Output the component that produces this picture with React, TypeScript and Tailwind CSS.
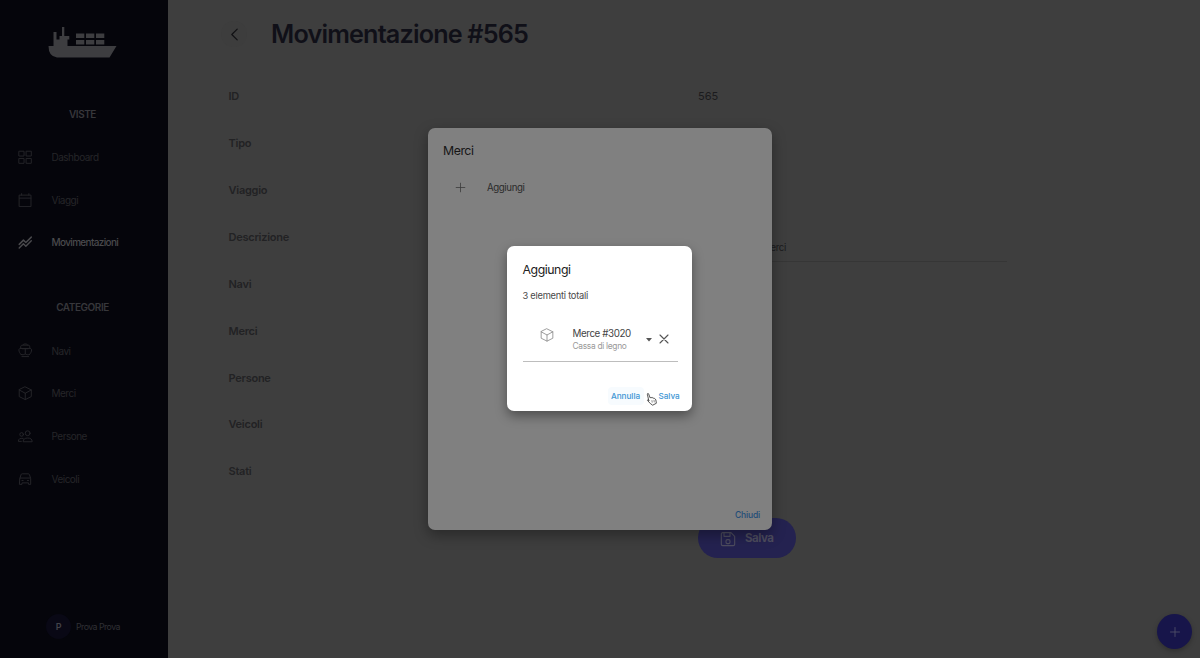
import React from "react";

type IconProps = { className?: string; sw?: number; children: React.ReactNode };

function Icon({ className = "size-4", sw = 1.5, children }: IconProps) {
  return (
    <svg
      viewBox="0 0 24 24"
      fill="none"
      stroke="currentColor"
      strokeWidth={sw}
      strokeLinecap="round"
      strokeLinejoin="round"
      className={`shrink-0 ${className}`}
    >
      {children}
    </svg>
  );
}

const cube = (
  <>
    <path d="M12 1.5 22 6.5v11l-10 5-10-5v-11z" />
    <path d="M2 6.500l10 5.500 10-5.500M12 12v10.500" />
  </>
);

const icons = {
  dashboard: <path strokeLinejoin="miter" d="M2 2h8v8H2zM14 2h8v8h-8zM2 14h8v8H2zM14 14h8v8h-8z" />,
  calendar: <path d="M2.500 3.500h19v19h-19zM2.500 8.500h19M6 3.500V1M18 3.500V1" />,
  moves: <path d="M2 15.500l7-7 4 4 9-9M2 21.500l7-7 4 4 9-9" />,
  ship: (
    <>
      <path d="M8 3.500C8.500 2 10 1.500 12 1.500s3.500.5 4 2M4.500 9V6.500c0-2 1-3 3-3h9c2 0 3 1 3 3V9" />
      <path d="M5 19C3 17 1.500 14 1.500 11.500 1.500 9.500 3 9 5 9h14c2 0 3.500.5 3.500 2.500 0 2.500-1.500 5.500-3.500 7.500M12 9v9M7.500 9.500h9" />
      <path d="M5 19c2.500 1 5 .5 7-1 2 1.500 4.500 2 7 1M6.500 22.500h11" />
    </>
  ),
  cube,
  people: (
    <>
      <circle cx="16" cy="7" r="4" />
      <path d="M8.500 20.500c0-4 3-5.500 7.500-5.500s7.500 1.500 7.500 5.500z" />
      <circle cx="6" cy="9" r="3" />
      <path d="M8.500 15.500C3 15 .5 16.500.5 20.500h5" />
    </>
  ),
  car: (
    <>
      <path d="M3 11l2-6.500c.3-1 1-1.500 2-1.500h10c1 0 1.700.5 2 1.500L21 11v9.500h-3.500V18h-11v2.500H3zM3.500 10h17" />
      <path d="M6.500 14h2M15.500 14h2" />
    </>
  ),
};

function Logo() {
  return (
    <svg viewBox="0 0 69 31" className="h-[31px] w-[69px] fill-[#3d3d40]">
      <path d="M0.500 19H5.500V5h3v7.500h3V9H14V0h2.300v9h5v3.500H19.500V19H68.500L61.500 30.500H9Q0.500 29.500 0.500 19Z" />
      <path d="M28 6.500h8.300V11H28zM38 6.500h8.300V11H38zM48 6.500h8.300V11H48zM28 13h8.300v4.500H28zM38 13h8.300v4.500H38zM48 13h8.300v4.500H48z" />
    </svg>
  );
}

function NavItem({ icon, label, active = false }: { icon: React.ReactNode; label: string; active?: boolean }) {
  return (
    <li
      className={`flex h-[42.75px] items-center gap-[19px] pl-[18px] ${
        active
          ? "text-[10px] font-medium tracking-[-0.65px] text-[#4a4a4d]"
          : "pt-px text-[10px] tracking-[-0.5px] text-[#252529]"
      }`}
    >
      <Icon className="-mt-px size-[14.5px]" sw={active ? 2.4 : 1.6}>{icon}</Icon>
      {label}
    </li>
  );
}

const rows = ["ID", "Tipo", "Viaggio", "Descrizione", "Navi", "Merci", "Persone", "Veicoli", "Stati"];

function Sidebar() {
  return (
    <aside className="flex w-[168px] shrink-0 flex-col bg-[#05050b]">
      <div className="mt-[27px] pl-12">
        <Logo />
      </div>
      <h2 className="mt-[49px] h-[14px] pr-[3px] text-center text-[10px] leading-[14px] font-semibold tracking-[-0.45px] text-[#37373b]">VISTE</h2>
      <ul className="mt-[15px]">
        <NavItem icon={icons.dashboard} label="Dashboard" />
        <NavItem icon={icons.calendar} label="Viaggi" />
        <NavItem icon={icons.moves} label="Movimentazioni" active />
      </ul>
      <h2 className="mt-9 h-[14px] pr-[3px] text-center text-[10px] leading-[14px] font-semibold tracking-[-0.45px] text-[#37373b]">CATEGORIE</h2>
      <ul className="mt-[15px]">
        <NavItem icon={icons.ship} label="Navi" />
        <NavItem icon={icons.cube} label="Merci" />
        <NavItem icon={icons.people} label="Persone" />
        <NavItem icon={icons.car} label="Veicoli" />
      </ul>
      <div className="mt-auto mb-[19px] flex items-center gap-[5px] pl-[46px] text-[8.8px] tracking-[-0.55px] text-[#303035]">
        <span className="grid size-[25px] place-items-center rounded-full bg-[#090815] text-[9px] font-semibold text-[#424249]">P</span>
        Prova Prova
      </div>
    </aside>
  );
}

function Main() {
  return (
    <main className="flex-1 bg-[#3e3e3e] pl-[53px]">
      <header className="mt-[21px] flex h-[26px] items-center">
        <span className="grid size-[26px] place-items-center rounded-full bg-[#3d3d3d] pl-px text-[#111114]">
          <Icon className="size-[13px]" sw={2.2}>
            <path d="M17 2 7 12l10 10" />
          </Icon>
        </span>
        <h1 className="mt-[2px] ml-[24px] text-[25.2px] font-semibold tracking-[-0.83px] whitespace-nowrap text-[#101018]">Movimentazione #565</h1>
      </header>
      <dl className="mt-[26px] pl-[7px]">
        {rows.map((label) => (
          <div key={label} className="flex h-[46.9px] items-center">
            <dt className="w-[470px] pl-[0.5px] text-[11px] font-semibold tracking-[-0.25px] text-[#222224]">{label}</dt>
            {label === "ID" && <dd className="text-[11px] text-[#1b1b1d]">565</dd>}
            {label === "Descrizione" && (
              <dd className="mt-[24px] h-[25px] w-[309px] border-b border-[#363636]">
                <span className="block w-[88px] text-right text-[9.5px] leading-[21px] tracking-[-0.3px] text-[#1b1b1d]">Scarico merci</span>
              </dd>
            )}
          </div>
        ))}
      </dl>
      <button className="mt-[23px] ml-[477px] flex h-[40px] w-[98px] items-center gap-[9px] rounded-full bg-[#242250] pt-px pl-[22px] text-[11.5px] font-bold tracking-[-0.5px] text-[#4d4c5e]">
        <Icon className="size-4" sw={1.7}>
          <path d="M2 4.500A2 2 0 0 1 4 2.500h12.500L22 8v12a2 2 0 0 1-2 2H4a2 2 0 0 1-2-2zM6 2.500V8h9V2.500" />
          <rect x="9" y="13" width="6" height="6" rx="2" />
        </Icon>
        Salva
      </button>
    </main>
  );
}

function PointerCursor() {
  return (
    <svg viewBox="0 0 24 24" className="h-[13px] w-[11px]" preserveAspectRatio="none" fill="#fff" stroke="#444" strokeWidth="1.8" strokeLinejoin="round" strokeLinecap="round">
      <path d="M6 14 3 2.500c-.4-1.800 2-2.500 2.700-.8L9 9l2-1 2 1 2-.5 2 1.500c3-.5 4.500 2 5 5l.5 4-8 3.500-5-3-6-5.500c-1-1.500 1-2.500 2.500-1z" />
      <path d="M13 14l.5 3M17.500 13.500l.5 3" strokeWidth="1.2" />
    </svg>
  );
}

function AddDialog() {
  return (
    <section className="relative mr-px mb-px flex h-[165px] w-[185px] flex-col rounded-[7px] bg-white pr-[14.5px] pl-[15.5px] shadow-[0_5px_12px_rgba(0,0,0,0.4)]">
      <h3 className="mt-[15px] text-[12.3px] leading-[17px] tracking-[-0.45px] text-[#222]">Aggiungi</h3>
      <p className="mt-[10px] text-[9.3px] leading-[15px] tracking-[-0.25px] text-[#4a4a4a]">3 elementi totali</p>
      <div className="mt-[22px] flex h-[37px] border-b border-[#bdbdbd] pl-[17px]">
        <Icon className="mt-[3px] size-[14px] text-[#888]" sw={1.4}>{cube}</Icon>
        <div className="ml-[19px] w-[73px] shrink-0 whitespace-nowrap">
          <p className="mt-[3px] text-[9.8px] leading-3 tracking-[-0.4px] text-[#444]">Merce #3020</p>
          <p className="text-[8.4px] leading-[12px] tracking-[-0.3px] text-[#999]">Cassa di legno</p>
        </div>
        <svg viewBox="0 0 7 4" className="mt-[13px] h-[3.5px] w-[6px] shrink-0 fill-[#555]">
          <path d="M0 0h7L3.500 4z" />
        </svg>
        <Icon className="mt-[8px] ml-[6px] size-[12px] text-[#555]" sw={2.2}>
          <path d="M4 4l16 16M20 4 4 20" />
        </Icon>
      </div>
      <footer className="mt-[24px] -mr-[8px] flex h-[20px] items-center justify-end text-[8.2px] font-medium tracking-[-0.05px] text-[#4096d4]">
        <span className="grid h-[18px] w-[36px] place-items-center rounded-sm bg-[#f7fbfe]">Annulla</span>
        <span className="ml-[14px] w-[28px] pl-[1px]">Salva</span>
      </footer>
      <span className="absolute top-[147px] left-[139px]">
        <PointerCursor />
      </span>
    </section>
  );
}

export default function App() {
  return (
    <div className="relative flex h-[658px] w-[1200px] overflow-hidden font-['Inter','Liberation_Sans',sans-serif]">
      <Sidebar />
      <Main />
      <button className="absolute right-[8px] bottom-[9px] grid size-[35px] place-items-center rounded-full bg-[#17154a] text-[#4f4e68] shadow-[0_2px_5px_rgba(0,0,0,0.25)]">
        <Icon className="size-[12px]" sw={1.8}>
          <path d="M12 3v18M3 12h18" />
        </Icon>
      </button>
      <div className="absolute inset-0 grid place-items-center">
        <section className="flex h-[402px] w-[344px] flex-col rounded-[7px] bg-[#808080] px-[15px] shadow-[0_5px_14px_rgba(0,0,0,0.35)]">
          <h2 className="mt-[15px] text-[12.3px] leading-4 tracking-[-0.45px] text-[#151515]">Merci</h2>
          <div className="mt-[21px] flex h-4 items-center pl-[11px] text-[9.7px] tracking-[-0.4px] text-[#2b2b2b]">
            <Icon className="-mt-px size-[13px] text-[#3c3c3c]" sw={1.5}>
              <path d="M12 4v16M4 12h16" />
            </Icon>
            <span className="ml-5">Aggiungi</span>
          </div>
          <div className="mt-auto mb-[8px] -mr-[3px] text-right text-[8.5px] leading-[14px] font-medium tracking-[-0.15px] text-[#204c78]">Chiudi</div>
        </section>
      </div>
      <div className="absolute inset-0 grid place-items-center">
        <AddDialog />
      </div>
    </div>
  );
}
